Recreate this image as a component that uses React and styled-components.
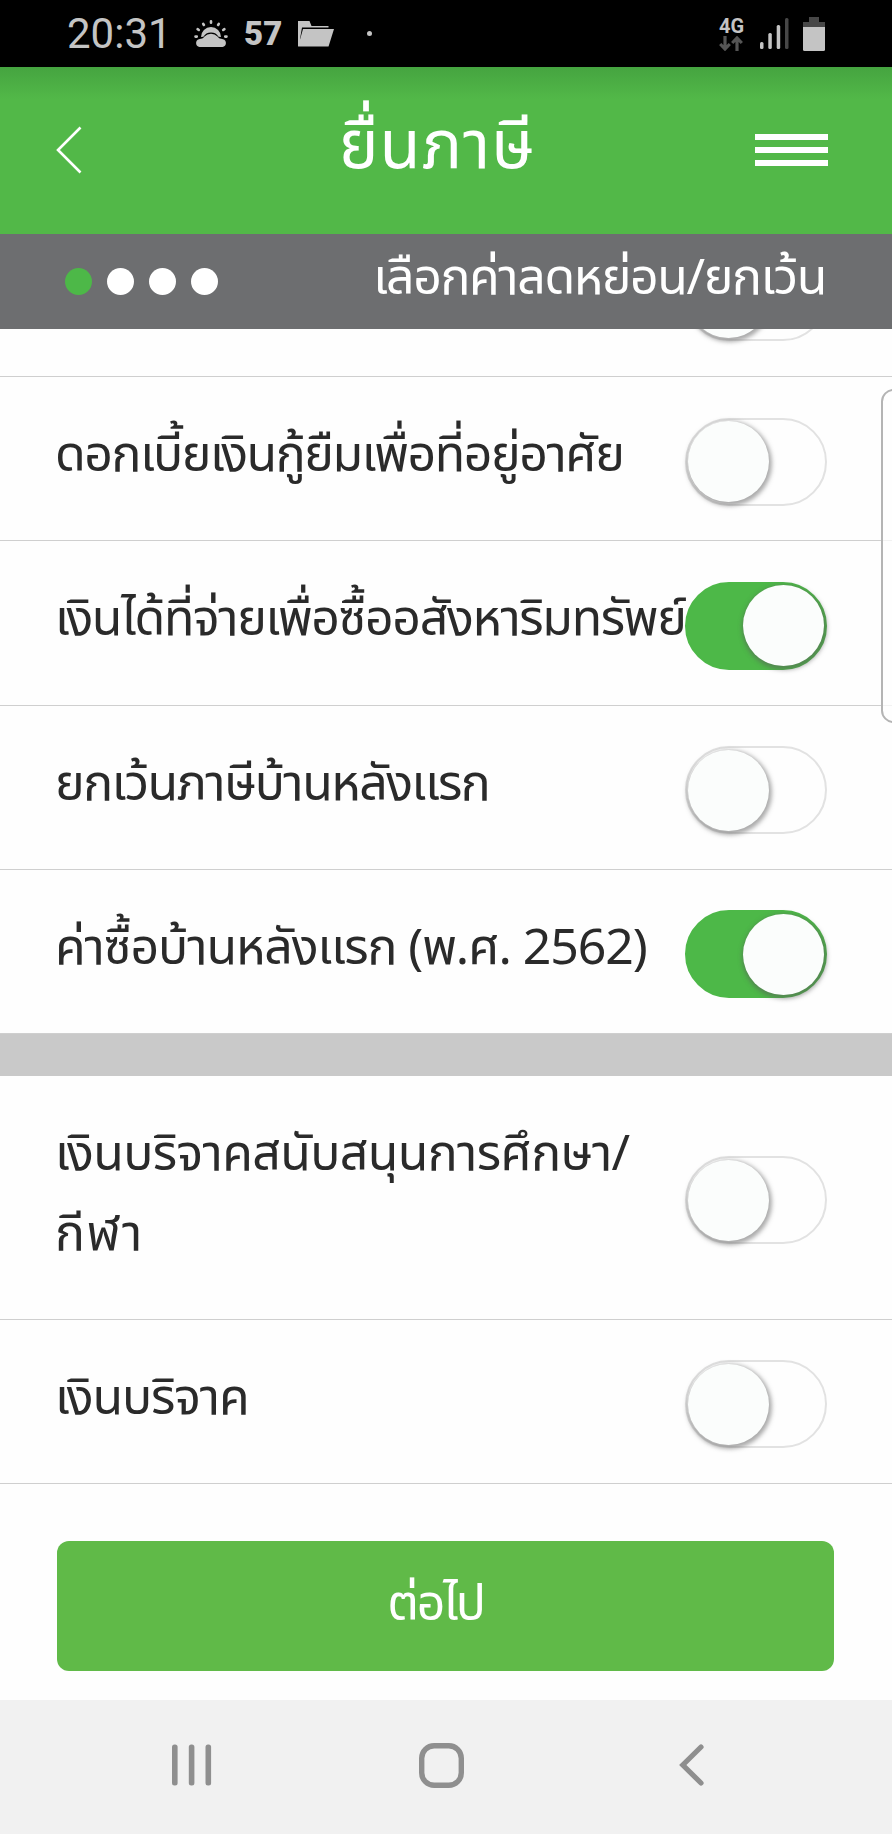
import React, { useState } from 'react';
import styled, { createGlobalStyle } from 'styled-components';

const GlobalStyle = createGlobalStyle`
  * {
    box-sizing: border-box;
  }

  body {
    margin: 0;
    background: #fefefe;
    font-family: "Noto Sans Thai", Kanit, Prompt, "Noto Sans", "Open Sans", sans-serif;
  }

  button {
    border: 0;
    padding: 0;
    background: none;
    font-family: inherit;
    cursor: pointer;
  }

  svg {
    display: block;
  }
`;

const firstGroup = [
  { id: 'loan', lines: ['ดอกเบี้ยเงินกู้ยืมเพื่อที่อยู่อาศัย'], spacing: -1.45, on: false },
  { id: 'property', lines: ['เงินได้ที่จ่ายเพื่อซื้ออสังหาริมทรัพย์'], spacing: -1.37, on: true },
  { id: 'firstHome', lines: ['ยกเว้นภาษีบ้านหลังแรก'], spacing: -1.5, on: false },
  { id: 'firstHome2562', lines: ['ค่าซื้อบ้านหลังแรก (พ.ศ. 2562)'], spacing: -1.1, on: true },
];

const secondGroup = [
  { id: 'education', lines: ['เงินบริจาคสนับสนุนการศึกษา/', 'กีฬา'], spacing: -0.65, on: false, tall: true },
  { id: 'donation', lines: ['เงินบริจาค'], spacing: -1.1, on: false },
];

function StatusBar() {
  return (
    <Status>
      <Clock>20:31</Clock>
      <svg width="34" height="28" viewBox="0 0 34 28" fill="#c4c4c4">
        <g stroke="#c4c4c4" strokeWidth="2.6" strokeLinecap="round">
          <path d="M17 1.3v1.4M9.2 3.8l.7 1.2M24.8 3.8l-.7 1.2M3.6 9.200l1.200.8M30.400 9.200l-1.200.8M1.500 16.600h1.300M32.500 16.600h-1.300" />
        </g>
        <path d="M7 17a10 10 0 0 1 20 0l-2.400-.2c-1.700-2.800-4-4.300-7.600-4.300s-5.900 1.500-7.600 4.300z" />
        <path d="M5.5 27a4 4 0 0 1-.5-7.800c2.800-.2 4-.8 5.500-2.600a8.600 8.600 0 0 1 13 0c1.500 1.800 2.700 2.400 5.500 2.600a4 4 0 0 1-.5 7.800z" stroke="#000" strokeWidth="1" paintOrder="stroke" />
      </svg>
      <Temp>57</Temp>
      <svg width="36" height="26" viewBox="0 0 36 26" fill="#c4c4c4">
        <path d="M0 0h11.500l2 5h17v1.500H4L2 18V25H0z" />
        <path d="M5 8h31l-5.500 17.500H0z" />
      </svg>
      <Dot />
      <Spacer />
      <Network>
        <span>4G</span>
        <svg width="24" height="15" viewBox="0 0 24 15" fill="none" stroke="#555" strokeWidth="3.2">
          <path d="M6 0v12M1.2 8 6 13l4.800-5M18 15V3M13.200 7 18 2l4.800 5" />
        </svg>
      </Network>
      <svg width="29" height="31" viewBox="0 0 29 31">
        <g fill="#c4c4c4">
          <rect y="24" width="3.500" height="7" rx="1.500" />
          <rect x="8.300" y="15" width="3.500" height="16" rx="1.500" />
          <rect x="16.700" y="7" width="3.500" height="24" rx="1.500" />
        </g>
        <rect x="25" width="3.500" height="31" rx="1.500" fill="#474747" />
      </svg>
      <Battery width="22" height="34" viewBox="0 0 22 34">
        <path d="M6 0h10v5h6v5H0V5h6z" fill="#474747" />
        <path d="M0 10h22v22.500q0 1.500-1.500 1.500h-19Q0 34 0 32.500z" fill="#c4c4c4" />
      </Battery>
    </Status>
  );
}

function Switch({ on, onClick }) {
  return (
    <Track $on={on} onClick={onClick} role="switch" aria-checked={on}>
      <Knob />
    </Track>
  );
}

function Allowance({ item }) {
  const [on, setOn] = useState(item.on);

  return (
    <Row $tall={item.tall}>
      <Label>
        {item.lines.map((line, i) => (
          <Line key={line} $spacing={i === 0 ? item.spacing : 1.8}>{line}</Line>
        ))}
      </Label>
      <Switch on={on} onClick={() => setOn(!on)} />
    </Row>
  );
}

export default function App() {
  return (
    <Page>
      <GlobalStyle />
      <StatusBar />

      <Header>
        <button aria-label="back">
          <svg width="26" height="48" viewBox="0 0 26 48" fill="none" stroke="#fff" strokeWidth="2.6">
            <path d="M24.500 1.500 2 24l22.500 22.500" />
          </svg>
        </button>
        <Title>ยื่นภาษี</Title>
        <Burger aria-label="menu">
          <i />
          <i />
          <i />
        </Burger>
      </Header>

      <Steps>
        <Step $active />
        <Step />
        <Step />
        <Step />
        <StepName>เลือกค่าลดหย่อน/ยกเว้น</StepName>
      </Steps>

      <List>
        {/* row that is scrolled under the step bar */}
        <CutRow>
          <Switch on={false} />
        </CutRow>
        {firstGroup.map((item) => (
          <Allowance key={item.id} item={item} />
        ))}
        <Gap />
        {secondGroup.map((item) => (
          <Allowance key={item.id} item={item} />
        ))}
        <EdgeHandle />
      </List>

      <Footer>
        <NextButton>ต่อไป</NextButton>
      </Footer>

      <NavBar>
        <svg width="40" height="42" viewBox="0 0 40 42" fill="#8f8f8f">
          <rect x="0" y="0.500" width="5.600" height="41" rx="2.500" />
          <rect x="16.800" y="0.500" width="5.600" height="41" rx="2.500" />
          <rect x="33.500" y="0.500" width="5.600" height="41" rx="2.500" />
        </svg>
        <HomeIcon width="45" height="45" viewBox="0 0 45 45" fill="none" stroke="#8f8f8f" strokeWidth="5.4">
          <rect x="2.700" y="2.700" width="39.600" height="39.600" rx="12.500" />
        </HomeIcon>
        <svg width="25" height="42" viewBox="0 0 25 42" fill="none" stroke="#8f8f8f" strokeWidth="5.2" strokeLinecap="round">
          <path d="M22 3 3.800 21 22 39" />
        </svg>
      </NavBar>
    </Page>
  );
}

const Page = styled.div`
  width: 892px;
  height: 1834px;
  display: flex;
  flex-direction: column;
  overflow: hidden;
`;

const Status = styled.div`
  flex: none;
  height: 67px;
  padding: 0 67px;
  display: flex;
  align-items: center;
  background: #000;
  color: #c4c4c4;
  font-family: Roboto, sans-serif;
`;

const Clock = styled.span`
  width: 127px;
  font-size: 42px;
  font-weight: 400;
  line-height: 67px;
`;

const Temp = styled.span`
  margin-left: 16px;
  width: 54px;
  font-size: 33px;
  font-weight: 900;
`;

const Dot = styled.span`
  width: 5px;
  height: 5px;
  margin-left: 33px;
  border-radius: 50%;
  background: #c4c4c4;
`;

const Spacer = styled.span`
  flex: 1;
`;

const Network = styled.div`
  width: 26px;
  margin-right: 15px;
  font-size: 20px;
  font-weight: 700;
  line-height: 19px;
`;

const Battery = styled.svg`
  margin-left: 14px;
`;

const Header = styled.header`
  flex: none;
  height: 167px;
  padding: 0 64px 2px 56px;
  display: flex;
  align-items: center;
  background: linear-gradient(#45a440, #52b848 32px);
`;

const Title = styled.h1`
  flex: 1;
  margin: 0;
  padding: 0 0 3px 37px;
  color: #fff;
  font-size: 67px;
  font-weight: 400;
  letter-spacing: 1px;
  line-height: 100px;
  text-align: center;
`;

const Burger = styled.button`
  width: 73px;
  display: flex;
  flex-direction: column;
  gap: 7px;

  i {
    height: 6px;
    background: #fff;
  }
`;

const Steps = styled.div`
  flex: none;
  height: 95px;
  padding: 0 66px 0 65px;
  display: flex;
  align-items: center;
  gap: 15px;
  background: #6d6e70;
`;

const Step = styled.span`
  width: 27px;
  height: 27px;
  border-radius: 50%;
  background: ${(props) => (props.$active ? '#4db848' : '#fff')};
`;

const StepName = styled.span`
  margin-left: auto;
  padding-bottom: 6px;
  color: #fff;
  font-size: 50px;
  letter-spacing: -1.4px;
  line-height: 80px;
  white-space: nowrap;
`;

const List = styled.main`
  position: relative;
  flex: none;
  height: 1156px;
  overflow: hidden;
`;

const CutRow = styled.div`
  height: 48px;
  padding: 0 65px 35px;
  display: flex;
  align-items: flex-end;
  justify-content: flex-end;
  border-bottom: 1px solid #cfcfcf;
`;

const Row = styled.div`
  height: ${(props) => (props.$tall ? '243.750px' : '164.250px')};
  padding: 6px 65px 0 55px;
  display: flex;
  align-items: center;
  justify-content: space-between;
  border-bottom: 1px solid #cfcfcf;
`;

const Label = styled.div`
  flex: 1;
  min-width: 0;
  padding-bottom: 11px;
  color: #2a2a2a;
  font-size: 50px;
  line-height: 80px;
  white-space: nowrap;
`;

const Line = styled.div`
  letter-spacing: ${(props) => props.$spacing}px;
`;

const Track = styled.button`
  flex: none;
  width: 142px;
  height: 88px;
  padding: 1px;
  display: flex;
  align-items: center;
  justify-content: ${(props) => (props.$on ? 'flex-end' : 'flex-start')};
  border: 2px solid ${(props) => (props.$on ? '#4db848' : '#e2e2e2')};
  border-radius: 44px;
  background: ${(props) => (props.$on ? '#4db848' : '#fefefe')};
`;

const Knob = styled.span`
  width: 81px;
  height: 81px;
  border-radius: 50%;
  background: #fbfdfc;
  box-shadow: 1px 2px 4px 2px rgba(90, 90, 90, 0.5);
`;

const Gap = styled.div`
  height: 42px;
  background: #c9c9c9;
`;

const EdgeHandle = styled.div`
  position: absolute;
  top: 60px;
  right: -14px;
  width: 25px;
  height: 334px;
  border: 2px solid #b4b4b4;
  border-radius: 14px;
  background: rgba(254, 254, 254, 0.75);
`;

const Footer = styled.div`
  flex: none;
  height: 215px;
  padding: 56px 58px 29px 57px;
  display: flex;
`;

const NextButton = styled.button`
  flex: 1;
  padding: 0 20px 3px 0;
  border-radius: 12px;
  background: #60ba48;
  color: #fff;
  font-size: 50px;
  letter-spacing: -2.2px;
`;

const NavBar = styled.nav`
  flex: 1;
  padding: 0 188px 4px 172px;
  display: flex;
  align-items: center;
  justify-content: space-between;
  background: #f1f1f1;
`;

const HomeIcon = styled.svg`
  margin-right: 8px;
`;
